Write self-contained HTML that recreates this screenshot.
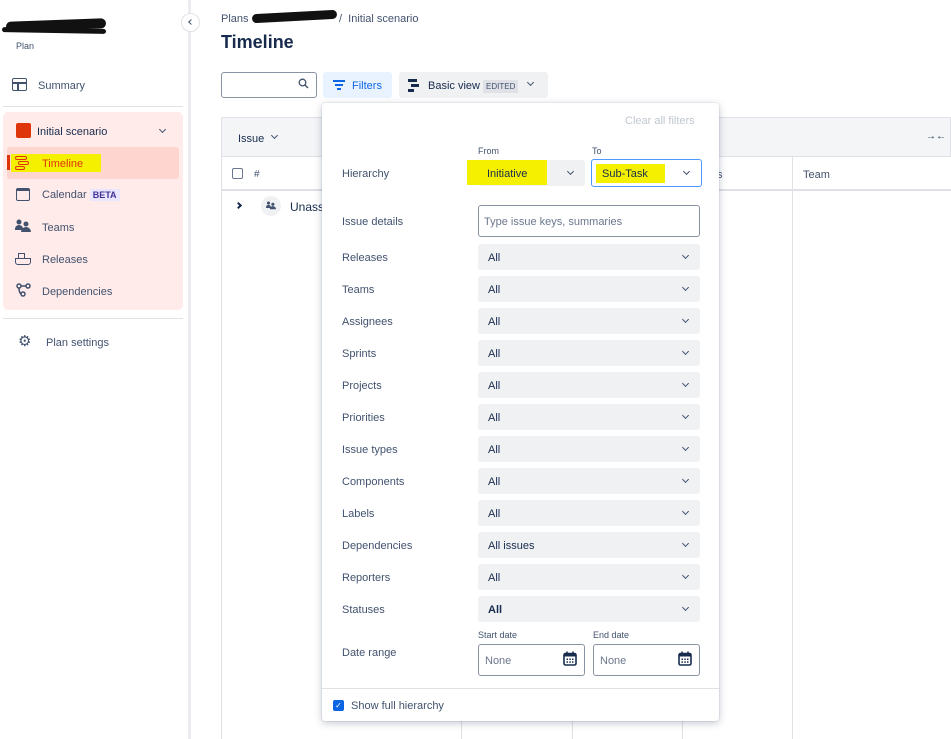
<!DOCTYPE html>
<html><head><style>
*{box-sizing:border-box;margin:0;padding:0}
body{width:951px;height:739px;overflow:hidden;background:#fff;font-family:"Liberation Sans",sans-serif;color:#172b4d;position:relative;font-size:11px}
.a{position:absolute}
.lab{position:absolute;left:342px;font-size:11px;color:#42526e}
.sel{position:absolute;left:478px;width:222px;height:26px;background:#f0f1f3;border-radius:3px;font-size:11px;padding:8px 0 0 10px;color:#172b4d}
.chev{position:absolute;right:12px;top:9px;width:5px;height:5px;border-right:1.6px solid #42526e;border-bottom:1.6px solid #42526e;transform:rotate(45deg)}
.side{position:absolute;font-size:11px;color:#42526e}
.hl{position:absolute;background:#f5f000}
</style></head><body>
<!-- sidebar -->
<div class="a" style="left:6px;top:20px;width:100px;height:10px;background:#111;border-radius:5px;transform:rotate(-2deg)"></div>
<div class="a" style="left:2px;top:28px;width:104px;height:5px;background:#111;border-radius:3px;transform:rotate(1deg)"></div>
<div class="side" style="left:16px;top:41px;font-size:9px">Plan</div>
<div class="a" style="left:188px;top:0;width:3px;height:739px;background:#ebecf0"></div>
<div class="a" style="left:181px;top:13px;width:19px;height:19px;border-radius:50%;background:#fff;border:1px solid #dfe1e6"></div>
<div class="a" style="left:189px;top:20px;width:4px;height:4px;border-left:1.5px solid #42526e;border-bottom:1.5px solid #42526e;transform:rotate(45deg)"></div>
<div class="a" style="left:12px;top:78px;width:15px;height:13px;border:1.6px solid #42526e;border-radius:2px"></div>
<div class="a" style="left:12px;top:82px;width:15px;height:1.6px;background:#42526e"></div>
<div class="a" style="left:17px;top:82px;width:1.6px;height:9px;background:#42526e"></div>
<div class="side" style="left:38px;top:80px">Summary</div>
<div class="a" style="left:3px;top:106px;width:180px;height:1px;background:#dfe1e6"></div>
<div class="a" style="left:3px;top:112px;width:180px;height:198px;background:#ffebe9;border-radius:5px"></div>
<div class="a" style="left:16px;top:123px;width:15px;height:15px;background:#de350b;border-radius:2px"></div>
<div class="side" style="left:37px;top:126px;color:#172b4d">Initial scenario</div>
<div class="a" style="left:160px;top:127px;width:5px;height:5px;border-right:1.5px solid #42526e;border-bottom:1.5px solid #42526e;transform:rotate(45deg)"></div>
<div class="a" style="left:7px;top:147px;width:172px;height:32px;background:#ffd5d0;border-radius:3px"></div>
<div class="a" style="left:7px;top:155px;width:3px;height:15px;background:#de350b"></div>
<div class="hl" style="left:11px;top:154px;width:90px;height:18px"></div>
<div class="a" style="left:15px;top:156px;width:12px;height:4px;border:1.5px solid #de350b;border-radius:2px"></div>
<div class="a" style="left:18px;top:161px;width:11px;height:4px;border:1.5px solid #de350b;border-radius:2px"></div>
<div class="a" style="left:15px;top:166px;width:10px;height:4px;border:1.5px solid #de350b;border-radius:2px"></div>
<div class="side" style="left:42px;top:158px;color:#de350b">Timeline</div>
<div class="a" style="left:16px;top:188px;width:14px;height:13px;border:1.6px solid #42526e;border-top-width:3px;border-radius:2px"></div>
<div class="side" style="left:42px;top:189px">Calendar <span style="background:#eae6ff;color:#403294;font-weight:bold;font-size:9px;padding:1px 3px">BETA</span></div>
<svg class="a" style="left:15px;top:219px" width="16" height="14" viewBox="0 0 16 14"><circle cx="4" cy="3" r="2.5" fill="#42526e"/><circle cx="11" cy="5" r="2.5" fill="#42526e"/><path d="M0 10a4 4 0 0 1 8 0v1H0z" fill="#42526e"/><path d="M6 13a5 5 0 0 1 10 0z" fill="#42526e"/></svg>
<div class="side" style="left:42px;top:222px">Teams</div>
<div class="a" style="left:15px;top:258px;width:16px;height:7px;border:1.5px solid #42526e;border-radius:0 0 3px 3px"></div>
<div class="a" style="left:18px;top:253px;width:7px;height:5px;border:1.5px solid #42526e;border-bottom:none"></div>
<div class="side" style="left:42px;top:254px">Releases</div>
<svg class="a" style="left:16px;top:283px" width="15" height="14" viewBox="0 0 15 14"><circle cx="3" cy="3" r="2" fill="none" stroke="#42526e" stroke-width="1.5"/><circle cx="12" cy="3" r="2" fill="none" stroke="#42526e" stroke-width="1.5"/><circle cx="7" cy="11" r="2" fill="none" stroke="#42526e" stroke-width="1.5"/><path d="M5 3h5M3 5c0 5 2 6 2 6" fill="none" stroke="#42526e" stroke-width="1.5"/></svg>
<div class="side" style="left:42px;top:286px">Dependencies</div>
<div class="a" style="left:3px;top:318px;width:180px;height:1px;background:#dfe1e6"></div>
<div class="side" style="left:18px;top:332px;font-size:15px">⚙</div>
<div class="side" style="left:46px;top:337px">Plan settings</div>
<!-- header -->
<div class="a" style="left:221px;top:13px;font-size:11px;color:#42526e">Plans</div>
<div class="a" style="left:252px;top:12px;width:85px;height:9px;background:#111;border-radius:5px;transform:rotate(-3deg)"></div>
<div class="a" style="left:339px;top:13px;font-size:11px;color:#42526e">/&nbsp; Initial scenario</div>
<div class="a" style="left:221px;top:32px;font-size:18px;font-weight:bold">Timeline</div>
<div class="a" style="left:221px;top:72px;width:96px;height:26px;border:1.5px solid #8993a4;border-radius:3px"></div>
<svg class="a" style="left:298px;top:78px" width="11" height="11" viewBox="0 0 11 11"><circle cx="4.5" cy="4.5" r="3.3" fill="none" stroke="#42526e" stroke-width="1.3"/><path d="M7 7l3 3" stroke="#42526e" stroke-width="1.4"/></svg>
<div class="a" style="left:323px;top:72px;width:69px;height:26px;background:#e9f2ff;border-radius:3px"></div>
<div class="a" style="left:333px;top:80px;width:12px;height:1.6px;background:#0c66e4"></div>
<div class="a" style="left:335px;top:84px;width:8px;height:1.6px;background:#0c66e4"></div>
<div class="a" style="left:337px;top:88px;width:4px;height:1.6px;background:#0c66e4"></div>
<div class="a" style="left:352px;top:80px;color:#0c66e4;font-size:11px">Filters</div>
<div class="a" style="left:399px;top:72px;width:149px;height:26px;background:#f0f1f3;border-radius:3px"></div>
<div class="a" style="left:408px;top:79px;width:9px;height:3px;background:#172b4d"></div>
<div class="a" style="left:411px;top:84px;width:8px;height:3px;background:#172b4d"></div>
<div class="a" style="left:408px;top:89px;width:6px;height:3px;background:#172b4d"></div>
<div class="a" style="left:428px;top:80px;font-size:11px">Basic view <span style="background:#dfe1e6;font-size:8px;padding:2px 3px;color:#42526e">EDITED</span></div>
<div class="a" style="left:528px;top:80px;width:5px;height:5px;border-right:1.5px solid #42526e;border-bottom:1.5px solid #42526e;transform:rotate(45deg)"></div>
<!-- table -->
<div class="a" style="left:221px;top:117px;width:730px;height:40px;background:#f4f5f7;border:1px solid #dfe1e6"></div>
<div class="a" style="left:238px;top:133px;font-size:11px">Issue</div>
<div class="a" style="left:272px;top:133px;width:5px;height:5px;border-right:1.5px solid #42526e;border-bottom:1.5px solid #42526e;transform:rotate(45deg)"></div>
<div class="a" style="left:926px;top:131px;font-size:10px;font-weight:bold">→←</div>
<div class="a" style="left:221px;top:157px;width:1px;height:582px;background:#dfe1e6"></div>
<div class="a" style="left:221px;top:189px;width:730px;height:2px;background:#dfe1e6"></div>
<div class="a" style="left:232px;top:168px;width:11px;height:11px;border:1.5px solid #6b778c;border-radius:2px"></div>
<div class="a" style="left:254px;top:169px;font-size:10px;color:#42526e">#</div>
<div class="a" style="left:236px;top:203px;width:5px;height:5px;border-right:2px solid #172b4d;border-top:2px solid #172b4d;transform:rotate(45deg)"></div>
<div class="a" style="left:261px;top:196px;width:20px;height:20px;border-radius:50%;background:#f0f1f3"></div>
<svg class="a" style="left:266px;top:201px" width="10" height="9" viewBox="0 0 16 14"><circle cx="4" cy="3" r="2.5" fill="#42526e"/><circle cx="11" cy="5" r="2.5" fill="#42526e"/><path d="M0 10a4 4 0 0 1 8 0v1H0z" fill="#42526e"/><path d="M6 13a5 5 0 0 1 10 0z" fill="#42526e"/></svg>
<div class="a" style="left:290px;top:200px;font-size:12px">Unass</div>
<div class="a" style="left:461px;top:157px;width:1px;height:582px;background:#dfe1e6"></div>
<div class="a" style="left:572px;top:157px;width:1px;height:582px;background:#dfe1e6"></div>
<div class="a" style="left:682px;top:157px;width:1px;height:582px;background:#dfe1e6"></div>
<div class="a" style="left:792px;top:157px;width:1px;height:582px;background:#dfe1e6"></div>
<div class="a" style="left:717px;top:169px;font-size:11px;color:#42526e">s</div>
<div class="a" style="left:803px;top:169px;font-size:11px;color:#42526e">Team</div>
<!-- popup -->
<div class="a" style="left:322px;top:103px;width:397px;height:618px;background:#fff;border-radius:3px;box-shadow:0 2px 8px rgba(9,30,66,.25),0 0 1px rgba(9,30,66,.3)"></div>
<div class="a" style="left:625px;top:115px;font-size:11px;color:#c1c7d0">Clear all filters</div>
<div class="a" style="left:478px;top:146px;font-size:9px;color:#42526e">From</div>
<div class="a" style="left:592px;top:146px;font-size:9px;color:#42526e">To</div>
<div class="lab" style="top:168px">Hierarchy</div>
<div class="sel" style="top:160px;width:107px"><div class="chev"></div></div>
<div class="hl" style="left:467px;top:160px;width:80px;height:25px"></div>
<div class="a" style="left:487px;top:168px;font-size:11px">Initiative</div>
<div class="a" style="left:591px;top:159px;width:111px;height:28px;border:1.5px solid #4c9aff;border-radius:3px;background:#fff"><div class="chev"></div></div>
<div class="hl" style="left:596px;top:164px;width:69px;height:19px"></div>
<div class="a" style="left:602px;top:168px;font-size:11px">Sub-Task</div>
<div class="lab" style="top:216px">Issue details</div>
<div class="a" style="left:478px;top:205px;width:222px;height:32px;border:1.5px solid #8993a4;border-radius:3px;padding:10px 0 0 5px;font-size:11px;color:#6b778c">Type issue keys, summaries</div>
<div class="lab" style="top:252px">Releases</div><div class="sel" style="top:244px">All<div class="chev"></div></div>
<div class="lab" style="top:284px">Teams</div><div class="sel" style="top:276px">All<div class="chev"></div></div>
<div class="lab" style="top:316px">Assignees</div><div class="sel" style="top:308px">All<div class="chev"></div></div>
<div class="lab" style="top:348px">Sprints</div><div class="sel" style="top:340px">All<div class="chev"></div></div>
<div class="lab" style="top:380px">Projects</div><div class="sel" style="top:372px">All<div class="chev"></div></div>
<div class="lab" style="top:412px">Priorities</div><div class="sel" style="top:404px">All<div class="chev"></div></div>
<div class="lab" style="top:444px">Issue types</div><div class="sel" style="top:436px">All<div class="chev"></div></div>
<div class="lab" style="top:476px">Components</div><div class="sel" style="top:468px">All<div class="chev"></div></div>
<div class="lab" style="top:508px">Labels</div><div class="sel" style="top:500px">All<div class="chev"></div></div>
<div class="lab" style="top:540px">Dependencies</div><div class="sel" style="top:532px">All issues<div class="chev"></div></div>
<div class="lab" style="top:572px">Reporters</div><div class="sel" style="top:564px">All<div class="chev"></div></div>
<div class="lab" style="top:604px">Statuses</div><div class="sel" style="top:596px;font-weight:bold">All<div class="chev"></div></div>
<div class="a" style="left:478px;top:630px;font-size:9px;color:#42526e">Start date</div>
<div class="a" style="left:593px;top:630px;font-size:9px;color:#42526e">End date</div>
<div class="lab" style="top:647px">Date range</div>
<div class="a" style="left:478px;top:644px;width:107px;height:32px;border:1.5px solid #8993a4;border-radius:3px;padding:10px 0 0 6px;font-size:11px;color:#6b778c">None</div>
<div class="a" style="left:593px;top:644px;width:107px;height:32px;border:1.5px solid #8993a4;border-radius:3px;padding:10px 0 0 6px;font-size:11px;color:#6b778c">None</div>
<svg class="a" style="left:563px;top:651px" width="14" height="15" viewBox="0 0 14 15"><rect x="1" y="2.5" width="12" height="11.5" rx="1.5" fill="none" stroke="#172b4d" stroke-width="1.6"/><rect x="1" y="2.5" width="12" height="3" fill="#172b4d"/><path d="M4 0.5v3M10 0.5v3" stroke="#172b4d" stroke-width="1.5"/><g fill="#172b4d"><rect x="3.5" y="7.5" width="1.5" height="1.5"/><rect x="6.3" y="7.5" width="1.5" height="1.5"/><rect x="9" y="7.5" width="1.5" height="1.5"/><rect x="3.5" y="10.3" width="1.5" height="1.5"/><rect x="6.3" y="10.3" width="1.5" height="1.5"/><rect x="9" y="10.3" width="1.5" height="1.5"/></g></svg>
<svg class="a" style="left:678px;top:651px" width="14" height="15" viewBox="0 0 14 15"><rect x="1" y="2.5" width="12" height="11.5" rx="1.5" fill="none" stroke="#172b4d" stroke-width="1.6"/><rect x="1" y="2.5" width="12" height="3" fill="#172b4d"/><path d="M4 0.5v3M10 0.5v3" stroke="#172b4d" stroke-width="1.5"/><g fill="#172b4d"><rect x="3.5" y="7.5" width="1.5" height="1.5"/><rect x="6.3" y="7.5" width="1.5" height="1.5"/><rect x="9" y="7.5" width="1.5" height="1.5"/><rect x="3.5" y="10.3" width="1.5" height="1.5"/><rect x="6.3" y="10.3" width="1.5" height="1.5"/><rect x="9" y="10.3" width="1.5" height="1.5"/></g></svg>
<div class="a" style="left:322px;top:688px;width:397px;height:1px;background:#dfe1e6"></div>
<div class="a" style="left:333px;top:700px;width:11px;height:11px;background:#0c66e4;border-radius:2px;color:#fff;font-size:8px;text-align:center;line-height:11px">✓</div>
<div class="a" style="left:351px;top:700px;font-size:11px;color:#42526e">Show full hierarchy</div>
</body></html>
